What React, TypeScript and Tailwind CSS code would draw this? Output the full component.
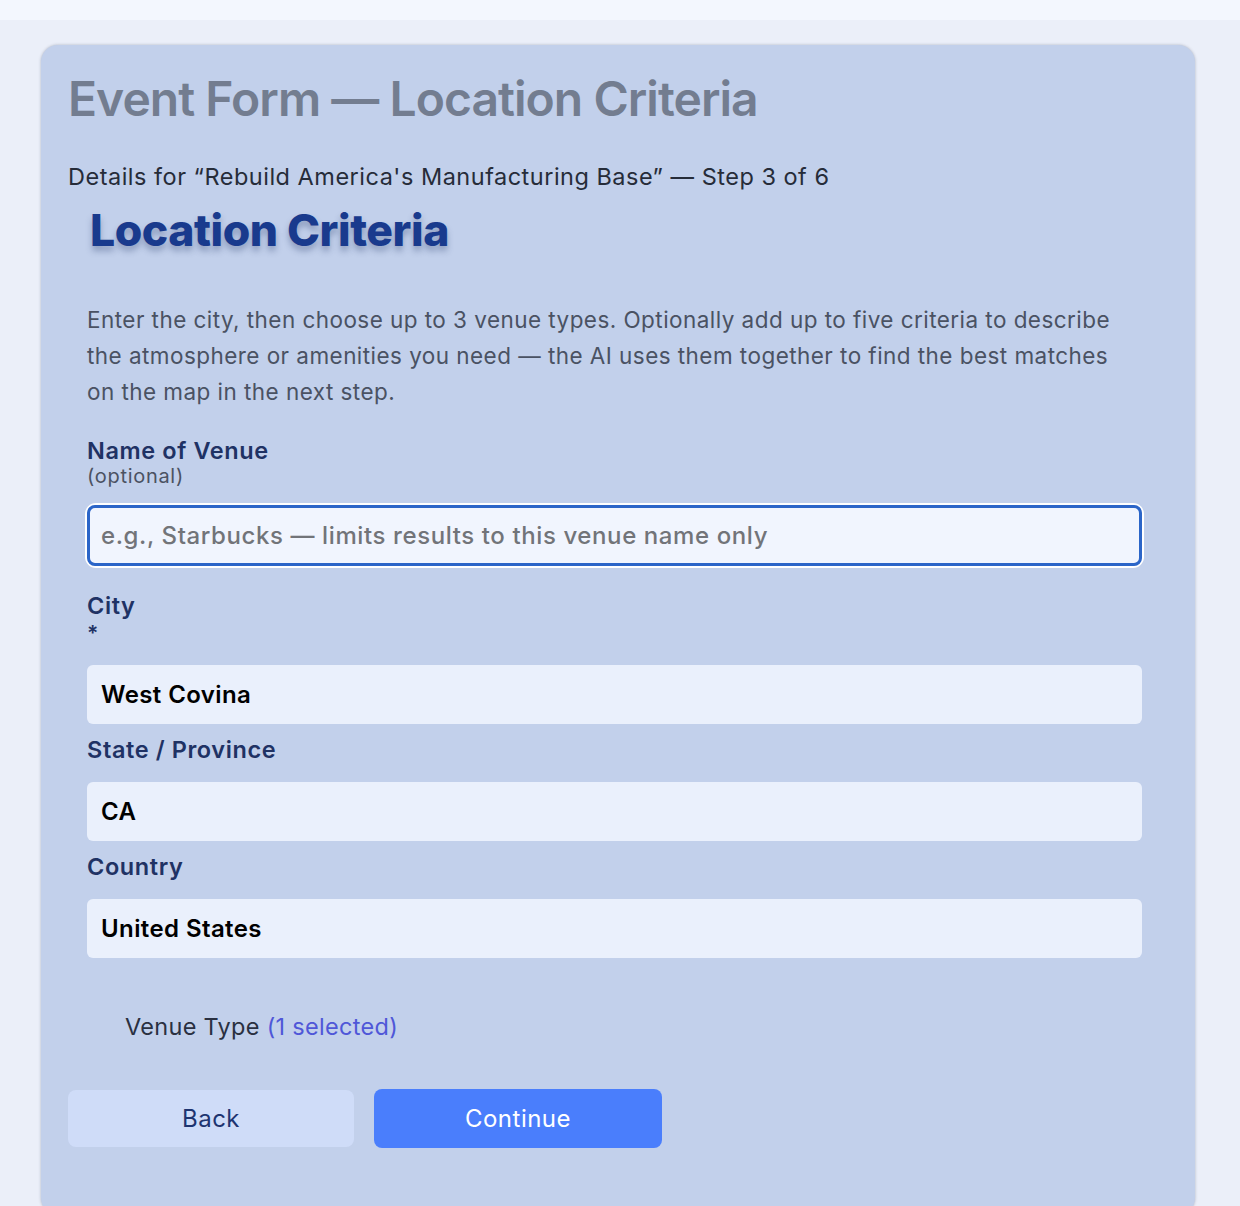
import React from "react";

const font = { fontFamily: "Inter, 'Noto Sans', sans-serif" };

function Field({
  label,
  sub,
  value,
  placeholder,
  focused,
}: {
  label: string;
  sub?: React.ReactNode;
  value?: string;
  placeholder?: string;
  focused?: boolean;
}) {
  return (
    <div className="flex flex-col">
      <label className="text-[23.5px] leading-7 font-semibold tracking-[0.6px] text-[#1f3264]">{label}</label>
      {sub}
      {focused ? (
        <div className="mt-[18px] rounded-[9px] ring-2 ring-white">
          <input
            readOnly
            placeholder={placeholder}
            className="h-[61px] w-full rounded-[8px] border-[3px] border-[#2b65c8] bg-[#f1f5fe] px-[11px] text-[24px] font-medium tracking-[0.6px] text-black outline-none placeholder:text-[#727479]"
          />
        </div>
      ) : (
        <input
          readOnly
          value={value}
          className="mt-[18px] h-[59px] w-full rounded-[6px] bg-[#eaf0fc] px-[14px] text-[24px] font-semibold tracking-[0.4px] text-black outline-none"
        />
      )}
    </div>
  );
}

export default function App() {
  return (
    <div className="min-h-[1206px] bg-[#ebeff9]" style={font}>
      <div className="h-5 bg-[#f3f7fe]" />
      <div className="pt-[25px] pl-[41px]">
        <div className="w-[1154px] rounded-[17px] bg-[#c2d0eb] px-[27px] pt-[25px] pb-[67px] shadow-[0_0_3px_rgba(60,70,90,0.35)]">
          <h1 className="text-[48px] leading-[58px] font-semibold tracking-[-0.02em] text-[#737d90]">
            Event Form — Location Criteria
          </h1>
          <p className="mt-[33px] text-[23.5px] leading-8 tracking-[0.5px] text-[#262c39]">
            Details for “Rebuild America's Manufacturing Base” — Step 3 of 6
          </p>
          <div className="pl-[19px] pr-[26px]">
            <h2 className="mt-[11px] ml-[3px] text-[44.5px] leading-[52px] font-extrabold tracking-[-0.01em] text-[#193a8d] [text-shadow:0_5px_6px_rgba(40,60,110,0.35)]">
              Location Criteria
            </h2>
            <p className="mt-[46px] text-[22.5px] leading-9 tracking-[0.45px] text-[#4a5263]">
              Enter the city, then choose up to 3 venue types. Optionally add up to five criteria to describe
              <br />
              the atmosphere or amenities you need — the AI uses them together to find the best matches
              <br />
              on the map in the next step.
            </p>
            <div className="mt-[27px] flex flex-col">
              <Field
                label="Name of Venue"
                sub={<span className="text-[20px] leading-[22px] tracking-[0.7px] text-[#4b5262]">(optional)</span>}
                placeholder="e.g., Starbucks — limits results to this venue name only"
                focused
              />
              <div className="mt-[26px]">
                <Field
                  label="City"
                  sub={<span className="text-[21px] leading-[27px] font-semibold text-[#1f3264]">*</span>}
                  value="West Covina"
                />
              </div>
              <div className="mt-[12px]">
                <Field label="State / Province" value="CA" />
              </div>
              <div className="mt-[12px]">
                <Field label="Country" value="United States" />
              </div>
              <div className="mt-[55px] pl-[38px] text-[23.5px] leading-7 tracking-[0.3px] text-[#2a3041]">
                Venue Type <span className="text-[#4f57d8]">(1 selected)</span>
              </div>
            </div>
          </div>
          <div className="mt-[48px] flex items-center gap-5">
            <button className="h-[57px] w-[286px] rounded-[8px] bg-[#cfdcf8] text-[24px] tracking-[0.5px] text-[#1e3470]">
              Back
            </button>
            <button className="h-[59px] w-[288px] rounded-[8px] bg-[#4a7efc] text-[24px] tracking-[0.5px] text-white">
              Continue
            </button>
          </div>
        </div>
      </div>
    </div>
  );
}
